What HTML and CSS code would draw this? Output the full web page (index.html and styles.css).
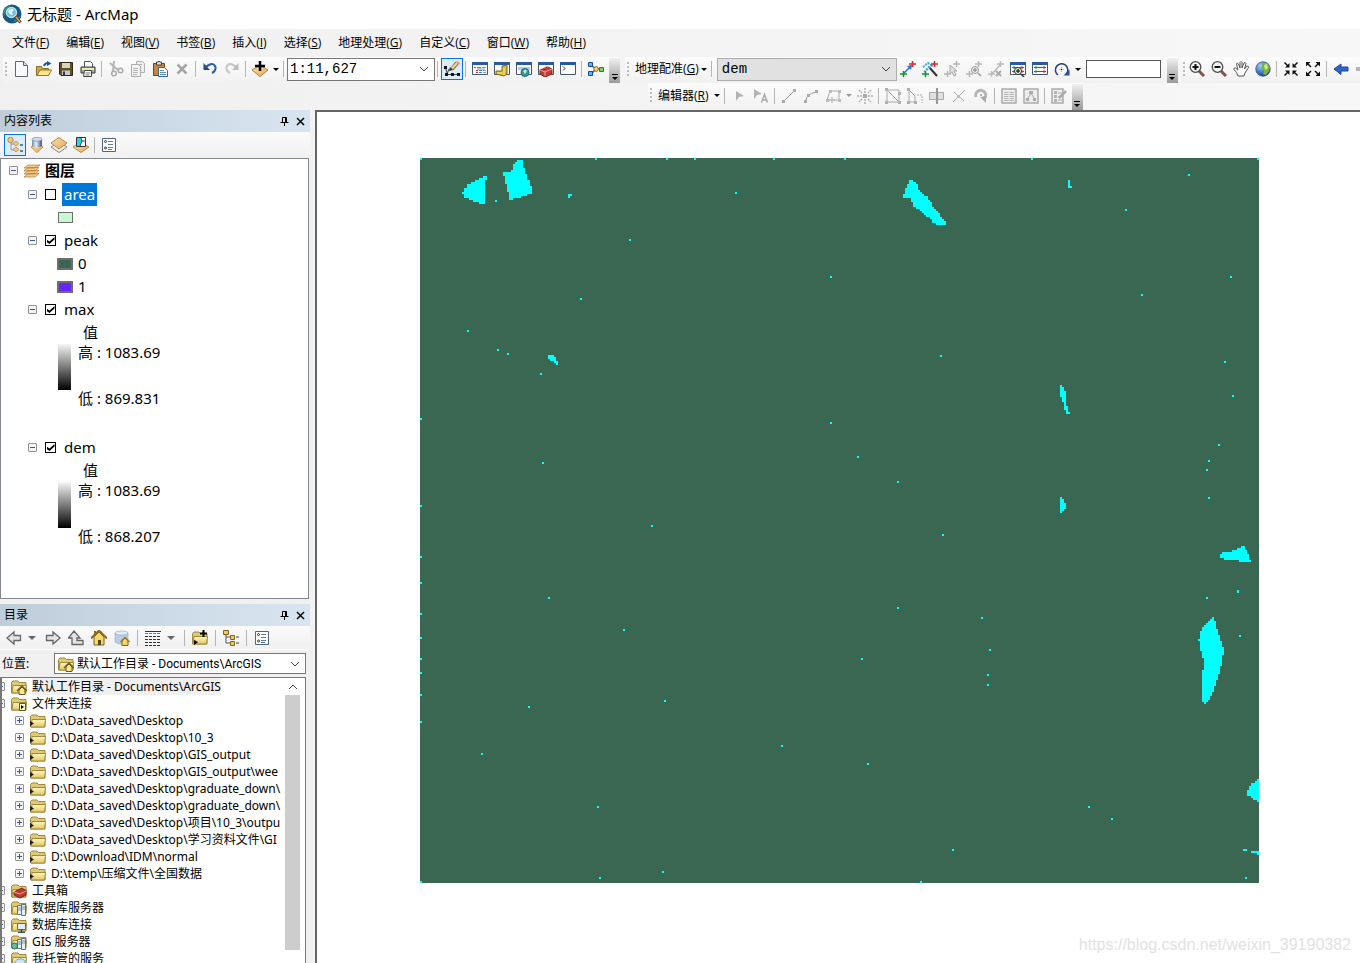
FILE: index.html
```
<!DOCTYPE html>
<html lang="zh-CN">
<head>
<meta charset="utf-8">
<title>无标题 - ArcMap</title>
<link rel="stylesheet" href="styles.css">
</head>
<body>
<svg class="sprite" aria-hidden="true">
  <defs>
    <linearGradient id="gold" x1="0" y1="0" x2="0" y2="1"><stop offset="0" stop-color="#fff8c0"/><stop offset="1" stop-color="#e3c662"/></linearGradient>
    <linearGradient id="steel" x1="0" x2="1" y1="0" y2="0"><stop offset="0" stop-color="#6f87a8"/><stop offset=".4" stop-color="#e8f0f8"/><stop offset="1" stop-color="#3c5478"/></linearGradient>
    <linearGradient id="tan" x1="0" y1="0" x2="1" y2="1"><stop offset="0" stop-color="#fbe3ae"/><stop offset="1" stop-color="#e0ab55"/></linearGradient>
    <radialGradient id="ball" cx=".35" cy=".3" r=".8"><stop offset="0" stop-color="#a8d4f8"/><stop offset=".6" stop-color="#2f72bf"/><stop offset="1" stop-color="#173a6e"/></radialGradient>
  </defs>
  <symbol id="logo" viewBox="0 0 20 20"><circle cx="10" cy="10" r="9.5" fill="#155a86"/><path d="M1 8Q3 2 9 1L6 6 2 12zM11 18l5-1 2-5-4 2z" fill="#2d8a73"/><circle cx="9.500" cy="8.500" r="5" fill="#6fbfe0" stroke="#c5dde8" stroke-width="1.300"/><path d="M6 7q3-4 6-1l-2 2 1 3q-4 0-5-4z" fill="#e0f6fc"/><path d="M13.500 12.500l5 6" stroke="#563d2a" stroke-width="3"/><path d="M14 13l4 5" stroke="#e39a5c" stroke-width="1.500"/></symbol>
  <symbol id="new" viewBox="0 0 16 16"><path d="M1.500.5h8l4 4v11h-12z" fill="#f8fbff" stroke="#5c6674"/><path d="M9.500.5v4h4" fill="#cfdbec" stroke="#5c6674"/></symbol>
  <symbol id="open" viewBox="0 0 16 16"><path d="M.5 14.500v-9h5l1 2h6v7z" fill="#cfa83e" stroke="#8b6f22"/><path d="M1 14.500l3-5.500h11.500l-3 5.500z" fill="#ffe589" stroke="#93772a"/><path d="M8 5q1-3 4-3" fill="none" stroke="#1d5794" stroke-width="2"/><path d="M11 0l4.500 2.500L11 5z" fill="#1d5794"/></symbol>
  <symbol id="save" viewBox="0 0 16 16"><path d="M1.500 1.500h13v13H3L1.500 13z" fill="#5d5224" stroke="#302b17"/><path d="M4 2h8v5H4z" fill="#d8d6bd"/><path d="M4 9.500h8V14H4z" fill="#c5cad2"/><path d="M5 10.500h2V14H5z" fill="#333"/></symbol>
  <symbol id="print" viewBox="0 0 16 16"><path d="M4.500 6V.5h6l2 2V6" fill="#fff" stroke="#48515d"/><path d="M1 6h14v6H1z" fill="#a8a9a4" stroke="#343a42"/><path d="M2 8h12" stroke="#ede9b1" stroke-width="2"/><path d="M4.500 9.500h7v6h-8z" fill="#fff" stroke="#444"/><path d="M5.500 12h5M5.500 14h4" stroke="#777"/></symbol>
  <symbol id="cut" viewBox="0 0 16 16"><path d="M2 2l8 7M6 0L5 10" stroke="#b5b5b5" stroke-width="2" fill="none"/><circle cx="6" cy="12.500" r="2.300" fill="none" stroke="#aaa" stroke-width="1.500"/><circle cx="12.500" cy="9.500" r="2.300" fill="none" stroke="#aaa" stroke-width="1.500"/></symbol>
  <symbol id="copy" viewBox="0 0 16 16"><path d="M6.500.5h6l2 2v9h-8z" fill="#eee" stroke="#b0b0b0"/><path d="M1.500 3.500h7l2 2v10h-9z" fill="#f4f4f4" stroke="#aaa"/><path d="M3 7.500h5M3 9.500h5M3 11.500h5M3 13.500h4M8 3.500h4" stroke="#b5b5b5"/></symbol>
  <symbol id="paste" viewBox="0 0 16 16"><path d="M1.500 2.500h11v12h-11z" fill="#c48642" stroke="#6d4720"/><path d="M4.500 3V1h1.500q1-1.500 2 0h1.500v3h-5z" fill="#ddd" stroke="#444"/><path d="M6.500 6.500h6l3 3v6h-9z" fill="#fff" stroke="#3a6a9b"/><path d="M8 9.500h4M8 11.500h6M8 13.500h6" stroke="#5c8fc4"/></symbol>
  <symbol id="del" viewBox="0 0 16 16"><path d="M3.500 3.500l9 9M12.500 3.500l-9 9" stroke="#a5a5a5" stroke-width="2.500"/></symbol>
  <symbol id="undo" viewBox="0 0 16 16"><path d="M4 6q7-6 9.500 0 .5 4-3.500 6" fill="none" stroke="#2b5fa0" stroke-width="2"/><path d="M1.500 2v7H8z" fill="#1f4c87"/></symbol>
  <symbol id="redo" viewBox="0 0 16 16"><path d="M12 6Q5 0 2.500 6 2 10 6 12" fill="none" stroke="#c5c5c5" stroke-width="2"/><path d="M14.500 2v7H8z" fill="#bbb"/></symbol>
  <symbol id="add" viewBox="0 0 16 16"><path d="M0 9l8-5 8 5-8 6.500z" fill="url(#tan)" stroke="#a97d38"/><path d="M8 0v10M3 5h10" stroke="#000" stroke-width="2.500"/></symbol>
  <symbol id="sketch" viewBox="0 0 16 16"><path d="M1.500 6.500l2 7h11M5 8l-2 5" fill="none" stroke="#444"/><path d="M0 5h3v3H0zM1 12h3v3H1zM7 12h3v3H7zM13 12h3v3h-3z" fill="#111"/><path d="M8 8l5-6" stroke="#9a6a36" stroke-width="4"/><path d="M8 7.500L13 2" stroke="#f5d79b" stroke-width="2"/><path d="M13 0l3 2-1 2-3-3z" fill="#da9491"/><path d="M5 10l1-4 3 3z" fill="#333"/></symbol>
  <symbol id="win" viewBox="0 0 16 16"><path d="M.5 1.500h15v12H.5z" fill="#fff" stroke="#46566b"/><path d="M0 1h16v3H0z" fill="#2859a6"/></symbol>
  <symbol id="wtoc" viewBox="0 0 16 16"><use href="#win"/><path d="M2 6.500h2M4 9.500h2M4 11.500h2" stroke="#d33"/><path d="M5 6.500h4M7 9.500h3M7 11.500h3" stroke="#3f80ce"/><path d="M10 6.500h4M11 9.500h3M11 11.500h3M5 8h8" stroke="#7a9bc8"/></symbol>
  <symbol id="wcat" viewBox="0 0 16 16"><use href="#win"/><path d="M8 5l5-1v9l-3 2-8-2v-3h6z" fill="#d5b735" stroke="#806c15"/><path d="M10 7v7M3 12h5" stroke="#fff09b"/></symbol>
  <symbol id="wsearch" viewBox="0 0 16 16"><use href="#win"/><path d="M2 6h12v3H2z" fill="#b3cde6"/><circle cx="9" cy="11.500" r="4" fill="#329b91" stroke="#25608b"/><path d="M7 10q3-3 4 0l-2 3z" fill="#b5efe2"/></symbol>
  <symbol id="wbox" viewBox="0 0 16 16"><use href="#win"/><path d="M2 9l8-3 4 2v5l-7 3-5-3z" fill="#c63a30" stroke="#81251f"/><path d="M2 9l5 2 7-3M7 11v4M6 7q1-3 4-1" stroke="#f4a096" fill="none"/></symbol>
  <symbol id="wpy" viewBox="0 0 16 16"><use href="#win"/><path d="M3 5.500l2 2-2 2" stroke="#222" fill="none"/></symbol>
  <symbol id="model" viewBox="0 0 16 16"><path d="M3 4l5 4-5 5M9 8h4" stroke="#555" fill="none" stroke-width="1.500"/><path d="M.5 1.500h4v4h-4zM.5 10.500h4v4h-4z" fill="#65aef0" stroke="#174b95"/><path d="M6 6.500l3-1 1.500 2.500L9 10.500l-3-1z" fill="#f6d76d" stroke="#89702a"/><path d="M11.500 6.500h4v4h-4z" fill="#80cf63" stroke="#377531"/></symbol>
  <symbol id="link" viewBox="0 0 16 16"><path d="M3 13L11 5" stroke="#2076d2" stroke-width="1.500"/><path d="M12 4l-1 5-4-4z" fill="#2076d2"/><path d="M3.500 10v6M0 13h7" stroke="#15932b" stroke-width="1.500"/><path d="M12.500 0v6M9 3h7" stroke="#e82222" stroke-width="1.500"/></symbol>
  <symbol id="wand" viewBox="0 0 16 16"><path d="M7 6l8 9" stroke="#333" stroke-width="2"/><path d="M2 11L12 3M1 6l5-4 3 2-5 5" fill="none" stroke="#4aa7dc" stroke-width="2" stroke-dasharray="2 1"/><path d="M3.500 10v6M0 13h7" stroke="#15932b" stroke-width="1.500"/><path d="M12.500 0v6M9 3h7" stroke="#e82222" stroke-width="1.500"/></symbol>
  <symbol id="gsel" viewBox="0 0 16 16"><path d="M3.500 10v6M0 13h7M12.500 0v6M9 3h7" stroke="#b5b5b5" stroke-width="1.500"/><path d="M6 4v9l2-2 2 4 2-1-2-4h3z" fill="#ddd" stroke="#aaa"/></symbol>
  <symbol id="gzoom" viewBox="0 0 16 16"><path d="M3.500 10v6M0 13h7M12.500 0v6M9 3h7" stroke="#b5b5b5" stroke-width="1.500"/><circle cx="9" cy="9" r="3.500" fill="#eee" stroke="#999"/><path d="M7 9h4M9 7v4M12 12l3 3" stroke="#999" stroke-width="1.500"/></symbol>
  <symbol id="gdel" viewBox="0 0 16 16"><path d="M3.500 10v6M0 13h7M12.500 0v6M9 3h7M4 13l8-9" stroke="#bcbcbc" stroke-width="1.500"/><path d="M8 10l5 5M13 10l-5 5" stroke="#aaa" stroke-width="2"/></symbol>
  <symbol id="wlink" viewBox="0 0 16 16"><use href="#win"/><path d="M5 6.500h5M5 10.500h5" stroke="#555"/><path d="M2 6.500h4M2 10.500h4M4 5v3M4 9v3" stroke="#15932b"/><path d="M10 6.500h4M10 10.500h4M12 5v3M12 9v3" stroke="#e02222"/></symbol>
  <symbol id="wview" viewBox="0 0 16 16"><use href="#wlink"/><circle cx="8" cy="10" r="3.500" fill="#f4f4f4" stroke="#333"/><path d="M6 10h4M8 8v4M11 13l3 3" stroke="#333" stroke-width="1.500"/></symbol>
  <symbol id="rotate" viewBox="0 0 16 16"><path d="M4 14A6.200 6.200 0 1 1 13 12" fill="none" stroke="#2b3b78" stroke-width="1.500"/><path d="M9.500 14.500h6v-6z" fill="#204ca8"/><path d="M7.500 6v5M5 8.500h5" stroke="#e0bb60"/><path d="M7 8h1v1H7z"/></symbol>
  <symbol id="zin" viewBox="0 0 16 16"><path d="M10 10l5 5" stroke="#80534a" stroke-width="3"/><circle cx="6.500" cy="6" r="5.300" fill="#f5f5f5" stroke="#4d4d4d" stroke-width="1.300"/><path d="M3.500 6h6M6.500 3v6" stroke="#111" stroke-width="2"/></symbol>
  <symbol id="zout" viewBox="0 0 16 16"><path d="M10 10l5 5" stroke="#80534a" stroke-width="3"/><circle cx="6.500" cy="6" r="5.300" fill="#f5f5f5" stroke="#4d4d4d" stroke-width="1.300"/><path d="M3.500 6h6" stroke="#111" stroke-width="2"/></symbol>
  <symbol id="hand" viewBox="0 0 16 16"><path d="M5 15Q4 11 1 8.500q-.5-2 1.500-1.500L5 9 3.500 3q.5-2 2 0L7 7 7 1.500q1-2 2 0V7l2-5q1.500-1 2 .5L11.500 8 14 5q2 0 1.500 1.500L12 12l-1 3z" fill="#fff" stroke="#555"/></symbol>
  <symbol id="globe" viewBox="0 0 16 16"><circle cx="8" cy="8" r="7.300" fill="url(#ball)" stroke="#4a5575" stroke-width=".7"/><path d="M8 2l4 0 3 4-1 4-3 4-3-1 1-3-3-3z" fill="#79b63d"/><path d="M9 4l3-1 1 4-3 2z" fill="#d0e498"/></symbol>
  <symbol id="inarr" viewBox="0 0 16 16"><path d="M1.500 1.500l4 4M14.500 1.500l-4 4M1.500 14.500l4-4M14.500 14.500l-4-4" stroke="#111" stroke-width="1.500"/><path d="M2 6.500h4.500V2zM14 6.500H9.500V2zM2 9.500h4.500V14zM14 9.500H9.500V14z" fill="#111"/></symbol>
  <symbol id="outarr" viewBox="0 0 16 16"><path d="M6 6L2 2M10 6l4-4M6 10l-4 4M10 10l4 4" stroke="#111" stroke-width="1.500"/><path d="M1 1h4.500L1 5.500zM15 1h-4.500l4.500 4.500zM1 15h4.500L1 10.500zM15 15h-4.500l4.500-4.500z" fill="#111"/></symbol>
  <symbol id="back" viewBox="0 0 16 16"><path d="M1 8l7-5v3h7v4H8v3.500z" fill="#2f66c5" stroke="#1d479a"/></symbol>
  <symbol id="fwd" viewBox="0 0 16 16"><path d="M15 8L8 3v3H1v4h7v3.500z" fill="#b5b5b5"/></symbol>
  <symbol id="earrow" viewBox="0 0 16 16"><path d="M5 3l8 5-5 1-3 4z" fill="#b3b3b3"/></symbol>
  <symbol id="earrowa" viewBox="0 0 16 16"><path d="M1 1l8 5-5 1-3 4z" fill="#b3b3b3"/><path d="M8.500 14.500l3-8 3 8M9 12h5" stroke="#aaa" stroke-width="1.500" fill="none"/></symbol>
  <symbol id="eline" viewBox="0 0 16 16"><path d="M3 13L13 3" stroke="#999"/><path d="M1 12h3v3H1zM12 1h3v3h-3z" fill="#aaa"/></symbol>
  <symbol id="ecurve" viewBox="0 0 16 16"><path d="M3 13q0-7 10-9" stroke="#999" fill="none"/><path d="M1 12h3v3H1zM12 2h3v3h-3zM4 6h3v3H4z" fill="#aaa"/></symbol>
  <symbol id="etrace" viewBox="0 0 16 16"><path d="M2 12L5 3h9v9H9M2 12h3M7 9v6M4 12h6" stroke="#aaa" fill="none"/><path d="M1 11h3v3H1zM4 2h3v3H4zM13 2h3v3h-3zM13 11h3v3h-3z" fill="#bbb"/></symbol>
  <symbol id="epoint" viewBox="0 0 16 16"><path d="M8 0v5M8 11v5M0 8h5M11 8h5M2 2l3 3M11 11l3 3M14 2l-3 3M5 11l-3 3" stroke="#b0b0b0" stroke-width="1.500" stroke-dasharray="2 1"/><path d="M6 6h4v4H6z" fill="#aaa"/></symbol>
  <symbol id="evert" viewBox="0 0 16 16"><path d="M2 2h12v12H2zM2 2l12 12" stroke="#aaa" fill="none"/><path d="M0 0h3v3H0zM13 4h3v3h-3zM0 13h3v3H0zM13 13h3v3h-3z" fill="#b0b0b0"/></symbol>
  <symbol id="eshape" viewBox="0 0 16 16"><path d="M2 2v12h6V8z" stroke="#aaa" fill="none"/><path d="M0 0h3v3H0zM0 13h3v3H0zM7 13h3v3H7z" fill="#b0b0b0"/><path d="M10 7h5v8" stroke="#aaa" fill="none" stroke-dasharray="2 1"/></symbol>
  <symbol id="esplit" viewBox="0 0 16 16"><path d="M.5 4.500h14v7H.5z" fill="#e0e0e0" stroke="#aaa"/><path d="M8 0v16" stroke="#999" stroke-width="2"/></symbol>
  <symbol id="ecut" viewBox="0 0 16 16"><path d="M2 14L14 2M3 4l10 9" stroke="#aaa"/><path d="M6 7h3v3H6z" fill="#bbb"/></symbol>
  <symbol id="erot" viewBox="0 0 16 16"><path d="M3 9A5 5 0 1 1 11 11" fill="none" stroke="#b5b5b5" stroke-width="3"/><path d="M7 9l6 6V8z" fill="#aaa"/><circle cx="8" cy="7" r="1" fill="#999"/></symbol>
  <symbol id="etab" viewBox="0 0 16 16"><path d="M1 1h14v14H1z" fill="#ededed" stroke="#aaa" stroke-width="1.500"/><path d="M3 4.500h10M3 6.500h10M3 8.500h10M3 10.500h10M3 12.500h10" stroke="#b5b5b5"/><path d="M8 3v11" stroke="#ededed"/></symbol>
  <symbol id="eskp" viewBox="0 0 16 16"><path d="M1 1h14v14H1z" fill="#ededed" stroke="#aaa" stroke-width="1.500"/><path d="M4 12l4-7 4 7" stroke="#aaa" fill="none"/><path d="M3 10h3v3H3zM6 3h4v3H6zM10 10h3v3h-3z" fill="#aaa"/></symbol>
  <symbol id="ecre" viewBox="0 0 16 16"><path d="M1 1h11v14H1z" fill="#eee" stroke="#aaa" stroke-width="1.500"/><path d="M3 3h3v3H3zM3 7h3v3H3zM3 11h3v3H3z" fill="#b5b5b5"/><path d="M7 5h4M7 9h2M7 12h4" stroke="#aaa"/><path d="M8 10l7-7" stroke="#aaa" stroke-width="2.500"/></symbol>
  <symbol id="ldraw" viewBox="0 0 16 16"><path d="M4 4v9h4M4 7h5" stroke="#999" fill="none"/><circle cx="3.500" cy="3" r="2.700" fill="#f4c77e" stroke="#b38645"/><path d="M9 4l3 2.500L9 9 6 6.500z" fill="#f4c77e" stroke="#c49a5a"/><path d="M9 10l3 2.500L9 15 6 12.500z" fill="#f4c77e" stroke="#c49a5a"/><path d="M13 8h3M13 14h3" stroke="#256887" stroke-width="1.500"/></symbol>
  <symbol id="lsrc" viewBox="0 0 16 16"><path d="M2 10l6-3 6 3-6 5.500z" fill="url(#tan)" stroke="#c49145"/><path d="M3 2v7q5 3.500 10 0V2z" fill="url(#steel)"/><ellipse cx="8" cy="2.300" rx="5" ry="2" fill="#cbd9e9" stroke="#65758c" stroke-width=".5"/></symbol>
  <symbol id="lvis" viewBox="0 0 16 16"><path d="M0 10l8-5 8 5-8 5.500z" fill="#eee" stroke="#888"/><path d="M0 6l8-5.500L16 6l-8 6z" fill="url(#tan)" stroke="#b98c4c"/></symbol>
  <symbol id="lsel" viewBox="0 0 16 16"><path d="M0 10l8-5 8 5-8 5.500z" fill="url(#tan)" stroke="#b98c4c"/><path d="M3.500.5h9v9h-9z" fill="#fff" stroke="#333"/><path d="M4 1h4l1 3-2 5H4z" fill="#1fd9ee"/><path d="M8 1l1 3h4M9 4L7 9" stroke="#444" fill="none"/></symbol>
  <symbol id="lopt" viewBox="0 0 16 16"><path d="M1.500 1.500h13v13h-13z" fill="#fff" stroke="#4c6684"/><circle cx="4.500" cy="4.500" r="1" fill="none" stroke="#333"/><circle cx="4.500" cy="11" r="1" fill="none" stroke="#333"/><path d="M7 4.500h5M7 7.500h5M7 10.500h5M7 12.500h4" stroke="#5d7da5"/></symbol>
  <symbol id="stack" viewBox="0 0 16 16"><path d="M0 14l4-3.500h11L11 14zM0 11l4-3.500h11L11 11zM0 8l4-3.500h11L11 8zM0 5l4-3h12L11 5z" fill="#f2ca86" stroke="#b07c38" stroke-width=".7"/></symbol>
  <symbol id="gback" viewBox="0 0 16 16"><path d="M1 8l7-6v3.500h6.500v5H8V14z" fill="#e5e5e5" stroke="#666" stroke-width="1.300"/></symbol>
  <symbol id="gfwd" viewBox="0 0 16 16"><path d="M15 8L8 2v3.500H1.500v5H8V14z" fill="#e5e5e5" stroke="#666" stroke-width="1.300"/></symbol>
  <symbol id="gup" viewBox="0 0 16 16"><path d="M6 1L.5 8H4v6.500h11v-4H9V8h3z" fill="#e5e5e5" stroke="#666" stroke-width="1.300"/></symbol>
  <symbol id="home" viewBox="0 0 16 16"><path d="M3 7v8h10V7L8 2z" fill="#f5d76b" stroke="#7b6420"/><path d="M0 8.500L8 .5l8 8" stroke="#8a6a1b" stroke-width="2" fill="none"/><path d="M7 10h3v5H7z" fill="#5d491c"/><path d="M3 1h2v4H3z" fill="#8a6a1b"/></symbol>
  <symbol id="dbhome" viewBox="0 0 16 16"><path d="M1 3v9q5 4 13 0V3z" fill="#b9cde0" stroke="#8298b2" stroke-width=".5"/><ellipse cx="7.500" cy="3" rx="6.500" ry="2" fill="#e2edf8" stroke="#8298b2" stroke-width=".5"/><path d="M8 11v4.500h6V11l-3-3z" fill="#f5d76b" stroke="#7b6420"/><path d="M6.500 12L11 7.500l4.500 4.500" stroke="#9a7722" stroke-width="1.500" fill="none"/></symbol>
  <symbol id="list" viewBox="0 0 18 16"><path d="M1 1.500h16" stroke="#333"/><path d="M1 3.500h16" stroke="#777" stroke-dasharray="3 1"/><path d="M1 6.500h16M1 9.500h16M1 12.500h16M1 15.500h16" stroke="#333" stroke-dasharray="3 1"/></symbol>
  <symbol id="folder" viewBox="0 0 16 16"><path d="M.5 14V3.500L2 2h5l1.500 1.500H15V14z" fill="#dfc877" stroke="#a08a3c"/><path d="M2 6.500h13.500L14.500 14H1z" fill="url(#gold)" stroke="#a08a3c"/></symbol>
  <symbol id="fadd" viewBox="0 0 16 16"><use href="#folder"/><path d="M11.500 0v7M8 3.500h7" stroke="#000" stroke-width="2"/><path d="M2 10l4 2-4 3z"/></symbol>
  <symbol id="fdir" viewBox="0 0 16 16"><use href="#folder"/><path d="M0 8l4 2.500L0 13z" fill="#222"/></symbol>
  <symbol id="fcon" viewBox="0 0 16 16"><use href="#folder"/><path d="M8.500 7.500h6v7h-6z" fill="#fff9ce" stroke="#665624"/><path d="M10 9l3 2-3 2z"/></symbol>
  <symbol id="fhome" viewBox="0 0 16 16"><use href="#folder"/><path d="M8 11v4.500h6V11l-3-3z" fill="#ffe58b" stroke="#6d571b"/><path d="M6 12l5-5 5 5" stroke="#755d21" stroke-width="1.500" fill="none"/></symbol>
  <symbol id="fbox" viewBox="0 0 16 16"><use href="#folder"/><path d="M3 9l8-4 4 3v4l-6 3-6-3z" fill="#bf392e" stroke="#77251f"/><path d="M3 9l6 2 6-3" stroke="#f6a095" fill="none"/></symbol>
  <symbol id="fsrv" viewBox="0 0 16 16"><use href="#folder"/><path d="M6.500 5.500h4v9h-4zM10.500 4.500h4v11h-4z" fill="#e6f0f8" stroke="#56738f"/><path d="M7 8h3M7 10h3M11 7h3M11 9h3" stroke="#7894b0"/></symbol>
  <symbol id="fdb" viewBox="0 0 16 16"><use href="#folder"/><path d="M6.500 6.500h8v6h-8z" fill="#e0effa" stroke="#526b84"/><path d="M10.500 12v3M7 15.500h7" stroke="#394d67" stroke-width="1.500"/></symbol>
  <symbol id="fgis" viewBox="0 0 16 16"><use href="#fsrv"/><circle cx="3.500" cy="12" r="3" fill="#6fbf8a" stroke="#2b6b7c"/></symbol>
  <symbol id="fcloud" viewBox="0 0 16 16"><use href="#folder"/><path d="M4 14q-1-5 4-6 5-1 6 3 3 3-1 4z" fill="#cae6f7" stroke="#7aa6c4"/></symbol>
  <symbol id="ctree" viewBox="0 0 16 16"><path d="M3 5v8h5M3 7h5" stroke="#555" fill="none"/><path d="M.5.5h5v4h-5zM7.500 5.500h4v4h-4zM7.500 11.500h4v4h-4z" fill="#efca57" stroke="#7e6826"/><path d="M13 7h3M13 13h3" stroke="#444"/></symbol>
  <symbol id="pin" viewBox="0 0 9 9"><path d="M2.500.5h4v5h-4zM5.500.5v5M.5 5.500h8M4.500 6v3" fill="none" stroke="#000"/></symbol>
  <symbol id="close" viewBox="0 0 9 9"><path d="M1 1l7 7M8 1L1 8" stroke="#000" stroke-width="1.500"/></symbol>
  <symbol id="chev" viewBox="0 0 10 6"><path d="M1 1l4 4 4-4" fill="none" stroke="#444"/></symbol>
</svg>

<header class="titlebar"><svg class="logo"><use href="#logo"/></svg><h1>无标题 - ArcMap</h1></header>

<nav class="menubar">
  <button>文件(<u>F</u>)</button><button>编辑(<u>E</u>)</button><button>视图(<u>V</u>)</button><button>书签(<u>B</u>)</button><button>插入(<u>I</u>)</button><button>选择(<u>S</u>)</button><button>地理处理(<u>G</u>)</button><button>自定义(<u>C</u>)</button><button>窗口(<u>W</u>)</button><button>帮助(<u>H</u>)</button>
</nav>

<div class="toolrow">
  <div class="toolbar">
    <i class="grip"></i>
    <button class="tool" aria-label="新建"><svg><use href="#new"/></svg></button>
    <button class="tool" aria-label="打开"><svg><use href="#open"/></svg></button>
    <button class="tool" aria-label="保存"><svg><use href="#save"/></svg></button>
    <button class="tool" aria-label="打印"><svg><use href="#print"/></svg></button>
    <i class="sep"></i>
    <button class="tool" aria-label="剪切"><svg><use href="#cut"/></svg></button>
    <button class="tool" aria-label="复制"><svg><use href="#copy"/></svg></button>
    <button class="tool" aria-label="粘贴"><svg><use href="#paste"/></svg></button>
    <button class="tool" aria-label="删除"><svg><use href="#del"/></svg></button>
    <i class="sep"></i>
    <button class="tool" aria-label="撤消"><svg><use href="#undo"/></svg></button>
    <button class="tool" aria-label="恢复"><svg><use href="#redo"/></svg></button>
    <i class="sep"></i>
    <button class="tool" aria-label="添加数据"><svg><use href="#add"/></svg></button>
    <button class="drop" aria-label="添加数据选项"></button>
    <i class="sep"></i>
    <div class="combo scale"><select aria-label="比例尺"><option>1:11,627</option></select><svg class="chev"><use href="#chev"/></svg></div>
    <i class="sep"></i>
    <button class="tool active" aria-label="编辑器工具条"><svg><use href="#sketch"/></svg></button>
    <i class="sep"></i>
    <button class="tool" aria-label="内容列表"><svg><use href="#wtoc"/></svg></button>
    <button class="tool" aria-label="目录"><svg><use href="#wcat"/></svg></button>
    <button class="tool" aria-label="搜索"><svg><use href="#wsearch"/></svg></button>
    <button class="tool" aria-label="工具箱"><svg><use href="#wbox"/></svg></button>
    <button class="tool" aria-label="Python"><svg><use href="#wpy"/></svg></button>
    <i class="sep"></i>
    <button class="tool" aria-label="模型构建器"><svg><use href="#model"/></svg></button>
    <button class="more" aria-label="工具条选项"></button>
  </div>
  <div class="toolbar">
    <i class="grip"></i>
    <button class="textbtn">地理配准(<u>G</u>)</button><i class="drop"></i>
    <i class="sep"></i>
    <div class="combo layer"><select aria-label="图层"><option>dem</option></select><svg class="chev"><use href="#chev"/></svg></div>
    <button class="tool" aria-label="添加控制点"><svg><use href="#link"/></svg></button>
    <button class="tool" aria-label="自动配准"><svg><use href="#wand"/></svg></button>
    <button class="tool" aria-label="选择连接"><svg><use href="#gsel"/></svg></button>
    <button class="tool" aria-label="缩放至连接"><svg><use href="#gzoom"/></svg></button>
    <button class="tool" aria-label="删除连接"><svg><use href="#gdel"/></svg></button>
    <button class="tool" aria-label="查看器"><svg><use href="#wview"/></svg></button>
    <button class="tool" aria-label="连接表"><svg><use href="#wlink"/></svg></button>
    <button class="tool" aria-label="旋转"><svg><use href="#rotate"/></svg></button>
    <button class="drop" aria-label="旋转选项"></button>
    <input class="angle" type="text" aria-label="角度">
    <button class="more" aria-label="工具条选项"></button>
  </div>
  <div class="toolbar last">
    <i class="grip"></i>
    <button class="tool" aria-label="放大"><svg><use href="#zin"/></svg></button>
    <button class="tool" aria-label="缩小"><svg><use href="#zout"/></svg></button>
    <button class="tool" aria-label="平移"><svg><use href="#hand"/></svg></button>
    <button class="tool" aria-label="全图"><svg><use href="#globe"/></svg></button>
    <i class="sep"></i>
    <button class="tool" aria-label="固定比例放大"><svg><use href="#inarr"/></svg></button>
    <button class="tool" aria-label="固定比例缩小"><svg><use href="#outarr"/></svg></button>
    <i class="sep"></i>
    <button class="tool" aria-label="上一视图"><svg><use href="#back"/></svg></button>
    <button class="tool" aria-label="下一视图"><svg><use href="#fwd"/></svg></button>
  </div>
</div>
<div class="toolrow second">
  <div class="toolbar editor">
    <i class="grip"></i>
    <button class="textbtn">编辑器(<u>R</u>)</button><i class="drop"></i>
    <i class="sep"></i>
    <button class="tool" aria-label="编辑工具"><svg><use href="#earrow"/></svg></button>
    <button class="tool" aria-label="编辑注记"><svg><use href="#earrowa"/></svg></button>
    <i class="sep"></i>
    <button class="tool" aria-label="直线段"><svg><use href="#eline"/></svg></button>
    <button class="tool" aria-label="弧线段"><svg><use href="#ecurve"/></svg></button>
    <button class="tool" aria-label="追踪"><svg><use href="#etrace"/></svg></button>
    <button class="drop dim" aria-label="构造方法"></button>
    <button class="tool" aria-label="点"><svg><use href="#epoint"/></svg></button>
    <i class="sep"></i>
    <button class="tool" aria-label="编辑折点"><svg><use href="#evert"/></svg></button>
    <button class="tool" aria-label="整形"><svg><use href="#eshape"/></svg></button>
    <button class="tool" aria-label="裁剪面"><svg><use href="#esplit"/></svg></button>
    <button class="tool" aria-label="分割"><svg><use href="#ecut"/></svg></button>
    <button class="tool" aria-label="旋转要素"><svg><use href="#erot"/></svg></button>
    <i class="sep"></i>
    <button class="tool" aria-label="属性"><svg><use href="#etab"/></svg></button>
    <button class="tool" aria-label="草图属性"><svg><use href="#eskp"/></svg></button>
    <i class="sep"></i>
    <button class="tool" aria-label="创建要素"><svg><use href="#ecre"/></svg></button>
    <button class="more" aria-label="工具条选项"></button>
  </div>
</div>

<main class="workspace">
  <aside class="side">
    <section class="panel contents">
      <header class="panelhead"><h2>内容列表</h2><button aria-label="固定"><svg><use href="#pin"/></svg></button><button aria-label="关闭"><svg><use href="#close"/></svg></button></header>
      <div class="paneltools">
        <button class="tool active" aria-label="按绘制顺序列出"><svg><use href="#ldraw"/></svg></button>
        <button class="tool" aria-label="按源列出"><svg><use href="#lsrc"/></svg></button>
        <button class="tool" aria-label="按可见性列出"><svg><use href="#lvis"/></svg></button>
        <button class="tool" aria-label="按选择列出"><svg><use href="#lsel"/></svg></button>
        <i class="sep"></i>
        <button class="tool" aria-label="选项"><svg><use href="#lopt"/></svg></button>
      </div>
      <div class="toc">
        <div class="row root"><button class="exp" aria-label="折叠"></button><svg class="ic"><use href="#stack"/></svg><b>图层</b></div>
        <div class="row lyr"><button class="exp" aria-label="折叠"></button><input type="checkbox" id="l1"><label for="l1" class="sel">area</label></div>
        <div class="row sym"><i class="swatch mint"></i></div>
        <div class="row lyr"><button class="exp" aria-label="折叠"></button><input type="checkbox" id="l2" checked><label for="l2">peak</label></div>
        <div class="row sym"><i class="swatch green"></i><span>0</span></div>
        <div class="row sym"><i class="swatch violet"></i><span>1</span></div>
        <div class="row lyr"><button class="exp" aria-label="折叠"></button><input type="checkbox" id="l3" checked><label for="l3">max</label></div>
        <div class="row val">值</div>
        <div class="ramp"><i></i><div><span>高 : 1083.69</span><span>低 : 869.831</span></div></div>
        <div class="row lyr"><button class="exp" aria-label="折叠"></button><input type="checkbox" id="l4" checked><label for="l4">dem</label></div>
        <div class="row val">值</div>
        <div class="ramp"><i></i><div><span>高 : 1083.69</span><span>低 : 868.207</span></div></div>
      </div>
    </section>
    <section class="panel catalog">
      <header class="panelhead"><h2>目录</h2><button aria-label="固定"><svg><use href="#pin"/></svg></button><button aria-label="关闭"><svg><use href="#close"/></svg></button></header>
      <div class="paneltools">
        <button class="tool" aria-label="后退"><svg><use href="#gback"/></svg></button>
        <button class="drop wide" aria-label="历史"></button>
        <button class="tool" aria-label="前进"><svg><use href="#gfwd"/></svg></button>
        <button class="tool" aria-label="向上"><svg><use href="#gup"/></svg></button>
        <button class="tool" aria-label="主目录"><svg><use href="#home"/></svg></button>
        <button class="tool" aria-label="默认地理数据库"><svg><use href="#dbhome"/></svg></button>
        <i class="sep"></i>
        <button class="tool broad" aria-label="视图"><svg><use href="#list"/></svg></button>
        <button class="drop wide" aria-label="视图选项"></button>
        <i class="sep"></i>
        <button class="tool" aria-label="连接文件夹"><svg><use href="#fadd"/></svg></button>
        <i class="sep"></i>
        <button class="tool" aria-label="目录树"><svg><use href="#ctree"/></svg></button>
        <i class="sep"></i>
        <button class="tool" aria-label="选项"><svg><use href="#lopt"/></svg></button>
      </div>
      <div class="location">
        <label for="loc">位置:</label>
        <div class="combo place"><svg class="ic"><use href="#fhome"/></svg><select id="loc"><option>默认工作目录 - Documents\ArcGIS</option></select><svg class="chev"><use href="#chev"/></svg></div>
      </div>
      <div class="tree">
        <ul>
          <li class="top"><button class="exp plus" aria-label="展开"></button><svg class="ic"><use href="#fhome"/></svg><span class="hot">默认工作目录 - Documents\ArcGIS</span></li>
          <li class="top"><button class="exp" aria-label="折叠"></button><svg class="ic"><use href="#fcon"/></svg><span>文件夹连接</span></li>
          <li><button class="exp plus" aria-label="展开"></button><svg class="ic"><use href="#fdir"/></svg><span>D:\Data_saved\Desktop</span></li>
          <li><button class="exp plus" aria-label="展开"></button><svg class="ic"><use href="#fdir"/></svg><span>D:\Data_saved\Desktop\10_3</span></li>
          <li><button class="exp plus" aria-label="展开"></button><svg class="ic"><use href="#fdir"/></svg><span>D:\Data_saved\Desktop\GIS_output</span></li>
          <li><button class="exp plus" aria-label="展开"></button><svg class="ic"><use href="#fdir"/></svg><span>D:\Data_saved\Desktop\GIS_output\wee</span></li>
          <li><button class="exp plus" aria-label="展开"></button><svg class="ic"><use href="#fdir"/></svg><span>D:\Data_saved\Desktop\graduate_down\</span></li>
          <li><button class="exp plus" aria-label="展开"></button><svg class="ic"><use href="#fdir"/></svg><span>D:\Data_saved\Desktop\graduate_down\</span></li>
          <li><button class="exp plus" aria-label="展开"></button><svg class="ic"><use href="#fdir"/></svg><span>D:\Data_saved\Desktop\项目\10_3\outpu</span></li>
          <li><button class="exp plus" aria-label="展开"></button><svg class="ic"><use href="#fdir"/></svg><span>D:\Data_saved\Desktop\学习资料文件\GI</span></li>
          <li><button class="exp plus" aria-label="展开"></button><svg class="ic"><use href="#fdir"/></svg><span>D:\Download\IDM\normal</span></li>
          <li><button class="exp plus" aria-label="展开"></button><svg class="ic"><use href="#fdir"/></svg><span>D:\temp\压缩文件\全国数据</span></li>
          <li class="top"><button class="exp plus" aria-label="展开"></button><svg class="ic"><use href="#fbox"/></svg><span>工具箱</span></li>
          <li class="top"><button class="exp plus" aria-label="展开"></button><svg class="ic"><use href="#fsrv"/></svg><span>数据库服务器</span></li>
          <li class="top"><button class="exp plus" aria-label="展开"></button><svg class="ic"><use href="#fdb"/></svg><span>数据库连接</span></li>
          <li class="top"><button class="exp plus" aria-label="展开"></button><svg class="ic"><use href="#fgis"/></svg><span>GIS 服务器</span></li>
          <li class="top"><button class="exp plus" aria-label="展开"></button><svg class="ic"><use href="#fcloud"/></svg><span>我托管的服务</span></li>
        </ul>
        <div class="scroll"><svg class="chev up"><use href="#chev"/></svg><i></i></div>
      </div>
    </section>
  </aside>
  <section class="mapview">
    <svg class="map" viewBox="420 158 839 725" role="img" aria-label="peak">
      <path d="M420 158h839v725h-839z" fill="#396751"/>
      <g fill="#0ff">
        <path d="M487 176H483V178H479V180H475V182H471V184H467V188H464V192H462V194H464V198H469V200H473V202H479V204H485V180H487Z"/>
        <path d="M517 160V162H515V164H513V170H511V172H503V176H505V184H507V192H509V200H513V198H521V196H527V194H532V186H530V180H527V174H525V168H523V160Z"/>
        <path d="M568 194h4v2h-2v2h-2zM548 355h6v2h2v4h2v4h-2v-2h-2v-2h-4v-2h-2z"/>
        <path d="M909 180H913V182H916V184H918V190H920V192H922V194H924V196H928V200H930V202H932V207H934V209H936V211H938V213H940V217H942V219H944V221H946V225H936V223H932V219H930V217H926V215H924V213H922V211H920V209H916V207H913V202H911V198H903V194H905V188H907V184H909Z"/>
        <path d="M1068 180h2v6h2v2h-4zM1060 385h2v2h2v4h2v15h2v6h2v2h-4v-4h-2v-8h-2v-5h-2zM1060 497h2v2h2v4h2v6h-2v2h-2v2h-2z"/>
        <path d="M1241 546H1245V550H1247V554H1249V560H1251V562H1239V560H1224V558H1220V554H1222V552H1232V550H1237V548H1241Z"/>
        <path d="M1212 617h2v4h2v8h2v6h2v6h2v6h2v8h-2v11h-2v8h-2v6h-2v6h-2v6h-2v4h-2v4h-2v2h-2v2h-2v-2h-2V670h2v-12h-2v-7h-2v-10h-2v-2h2v-8h2v-4h2v-2h2v-2h2v-2h2v-2h2z"/>
        <path d="M1257 779h2v23h-2v-2h-4v-2h-2v-2h-4v-6h2v-4h2v-3h4v-2h2zM1243 849h4v2h-4zM1251 851h8v4h-2v-2h-6zM1237 590h2v3h-2z"/>
      </g>
      <path fill="none" stroke="#0ff" stroke-width="2" d="M420 159h2M595 159h2M666 159h2M694 159h2M773 159h2M844 159h2M1031 159h2M1257 159h2M1188 175h2M495 201h2M735 193h2M1125 210h2M629 240h2M830 277h2M580 299h2M1141 295h2M1230 277h2M467 331h2M497 350h2M507 354h2M540 374h2M940 356h2M1224 362h2M1232 396h2M1218 445h2M1208 461h2M1206 470h2M1208 498h2M830 423h2M857 457h2M897 482h2M420 419h2M542 463h2M420 506h2M651 526h2M942 535h2M420 557h2M420 583h2M548 598h2M420 614h2M897 608h2M981 618h2M1206 598h2M1239 636h2M623 630h2M420 638h2M989 650h2M861 659h2M420 659h2M420 673h2M420 695h2M987 675h2M987 685h2M664 701h2M528 707h2M420 722h2M781 746h2M481 754h2M867 764h2M597 807h2M1088 807h2M1111 819h2M952 850h2M662 872h2M599 878h2M1245 878h2M920 882h2M420 882h2"/>
    </svg>
    <p class="mark">https://blog.csdn.net/weixin_39190382</p>
  </section>
</main>
</body>
</html>
```
FILE: styles.css
```
* { box-sizing: border-box; }
html, body { height: 100%; }
body {
  margin: 0;
  display: flex;
  flex-direction: column;
  overflow: hidden;
  background: linear-gradient(90deg, #f0f0f0, #f7f7f7);
  color: #000;
  font: 12px/16px "Noto Sans", "Noto Sans CJK SC", sans-serif;
}
button { margin: 0; padding: 0; border: 0; background: none; color: inherit; font: inherit; }
h1, h2, p, ul { margin: 0; padding: 0; font-weight: normal; }
.sprite { position: absolute; width: 0; height: 0; }

.titlebar { display: flex; align-items: center; gap: 5px; height: 29px; flex: none; padding: 0 0 2px 2px; background: #fff; }
.titlebar h1 { font-size: 15px; line-height: 20px; }
.logo { width: 20px; height: 20px; }

.menubar { display: flex; gap: 17px; height: 28px; flex: none; padding-left: 12px; align-items: center; }
.menubar button, .textbtn { font-family: "Open Sans", "Noto Sans CJK SC", sans-serif; white-space: nowrap; }
u { text-underline-offset: 1px; }

.toolrow { display: flex; gap: 5px; height: 26px; flex: none; padding-left: 3px; align-items: stretch; overflow: hidden; }
.toolrow.second { height: 27px; padding-left: 648px; }
.toolbar { display: flex; align-items: center; flex: none; padding-bottom: 2px; background: linear-gradient(#fcfcfc, #f1f1f1); }
.toolbar.last { flex: 1 0 0; margin-left: -2px; }
.grip { width: 2px; height: 15px; margin: 0 4px 0 2px; background: repeating-linear-gradient(#bbb 0 2px, transparent 2px 4px); flex: none; }
.last .grip { margin-right: 1px; }
.tool { width: 22px; height: 22px; display: grid; place-items: center; flex: none; }
.tool svg, .ic { width: 16px; height: 16px; display: block; flex: none; }
.tool.broad svg { width: 18px; }
.active { background: #dcebf8; border: 1px solid #0078d7; }
.sep { width: 6px; height: 16px; flex: none; background: linear-gradient(#b4b4b4, #b4b4b4) 2px 0 / 1px 100% no-repeat; }
.drop { width: 10px; height: 16px; display: grid; place-items: center; flex: none; }
.drop::before { content: ""; border: 3px solid transparent; border-top-color: #000; border-bottom: 0; }
.drop.dim::before { border-top-color: #999; }
.drop.wide { width: 14px; }
.drop.wide::before { border-width: 4px 4px 0; border-top-color: #666; }
.textbtn { margin: 0 0 0 2px; }
.editor .textbtn { margin-right: 3px; }
.more { width: 11px; align-self: stretch; margin: 1px 0 -2px 2px; display: flex; flex-direction: column; align-items: center; justify-content: flex-end; gap: 2px; padding-bottom: 3px; background: linear-gradient(#f0f0f0, #9a9a9a); }
.more::before { content: ""; width: 6px; height: 1px; background: #000; }
.more::after { content: ""; border: 3px solid transparent; border-top-color: #000; border-bottom: 0; }

.combo { display: grid; grid-template-columns: 1fr 20px; align-items: center; height: 23px; border: 1px solid #777; background: #fff; }
.combo select { grid-area: 1 / 1 / 2 / 3; width: 100%; height: 100%; padding: 0 20px 0 2px; border: 0; background: none; appearance: none; color: #000; font: 14px/20px "Liberation Mono", monospace; }
.chev { grid-area: 1 / 2; width: 10px; height: 6px; pointer-events: none; }
.combo .chev { justify-self: center; }
.scale { width: 148px; }
.layer { width: 180px; margin-left: 2px; background: #e1e1e1; border-color: #adadad; }
.layer select { padding-left: 4px; }
.angle { width: 75px; height: 18px; margin: 0 4px 0 3px; padding: 0 3px; border: 1px solid #555; background: #fff; }

.workspace { flex: 1; min-height: 0; display: flex; gap: 5px; }
.side { width: 310px; flex: none; display: flex; flex-direction: column; gap: 5px; background: #f0f0f0; min-height: 0; }
.panel { display: flex; flex-direction: column; }
.panelhead { display: flex; align-items: center; gap: 7px; height: 22px; flex: none; padding: 0 5px 0 4px; background: linear-gradient(90deg, #bfcddb, #d8e5f1); }
.panelhead h2 { flex: 1; font-size: 12px; line-height: 20px; }
.panelhead svg { width: 9px; height: 9px; display: block; }
.paneltools { display: flex; align-items: center; height: 26px; flex: none; padding-left: 4px; background: linear-gradient(#fafafa, #f0f0f0); }

.toc { height: 441px; width: 309px; border: 1px solid #828790; background: #fff; font-size: 15px; }
.row { display: flex; align-items: center; height: 23px; line-height: 23px; }
.toc .root { padding: 0 0 1px 8px; height: 24px; }
.toc .root .ic { margin: 0 5px 0 6px; }
.lyr { padding-left: 27px; }
.lyr input { appearance: none; width: 11px; height: 11px; margin: 0 6px 0 8px; border: 1px solid #000; background: #fff; display: grid; place-items: center; }
.lyr input:checked::before { content: ""; width: 8px; height: 7px; background: #000; clip-path: polygon(0 35%, 38% 65%, 100% 0, 100% 35%, 38% 100%, 0 70%); }
.lyr label { padding: 0 2px; }
.lyr .sel { background: #0078d7; color: #fff; }
.exp { width: 9px; height: 9px; flex: none; border: 1px solid #919191; border-radius: 1px; background: linear-gradient(#3c5a9a, #3c5a9a) center / 5px 1px no-repeat, #f4f4f4; }
.exp.plus { background: linear-gradient(#3c5a9a, #3c5a9a) center / 5px 1px no-repeat, linear-gradient(#3c5a9a, #3c5a9a) center / 1px 5px no-repeat, #f4f4f4; }
.sym { padding-left: 56px; gap: 5px; }
.swatch { width: 16px; height: 12px; border: 2px solid #6e6e6e; }
.mint { width: 15px; height: 11px; margin-left: 1px; border-width: 1px; background: #c8f8d2; }
.green { background: #396751; }
.violet { background: #6927f7; }
.val { padding-left: 82px; }
.ramp { display: flex; gap: 7px; padding-left: 57px; height: 92px; }
.ramp i { width: 13px; height: 46px; background: linear-gradient(#f6f6f6, #000); }
.ramp div { display: grid; grid-template-rows: 46px 46px; line-height: 16px; }

.catalog { flex: 1; min-height: 0; }
.catalog .drop { margin-right: 2px; }
.catalog .paneltools .tool { width: 23px; }
.catalog .paneltools .sep { margin-left: 2px; }
.catalog .paneltools { height: 24px; padding-left: 2px; border-bottom: 1px solid #fff; }
.location { display: flex; align-items: center; justify-content: space-between; height: 27px; flex: none; padding: 0 4px 0 2px; }
.location .combo { width: 252px; height: 21px; }
.place .ic { grid-area: 1 / 1; margin-left: 3px; }
.location select { padding-left: 22px; font: 12px/16px Roboto, "Noto Sans CJK SC", sans-serif; }
.tree { flex: 1; min-height: 0; width: 306px; display: flex; overflow: hidden; border: solid #777; border-width: 1px 1px 0 2px; background: #fff; }
.tree ul { flex: 1; min-width: 0; overflow: hidden; list-style: none; }
.tree li { display: flex; align-items: center; height: 17px; padding-left: 13px; white-space: nowrap; line-height: 17px; }
.tree li .ic { margin: 0 5px 0 6px; }
.tree .top { padding-left: 0; }
.tree .top .exp { margin-left: -6px; }
.hot { background: #f0f0f0; }
.scroll { width: 20px; flex: none; padding-right: 5px; display: flex; flex-direction: column; align-items: center; background: #fff; }
.scroll .up { transform: rotate(180deg); margin: 6px 0 5px; flex: none; }
.scroll i { width: 15px; height: 255px; background: #cdcdcd; }

.mapview { position: relative; flex: 1; min-width: 0; display: flex; justify-content: center; align-items: flex-start; padding: 46px 0 0 2px; border: solid #666; border-width: 2px 0 0 2px; background: #fff; }
.map { width: 839px; height: 725px; shape-rendering: crispEdges; flex: none; }
.mark { position: absolute; right: 9px; bottom: 8px; color: #e2e2e2; font: 16px/20px "Liberation Sans", sans-serif; }
```
